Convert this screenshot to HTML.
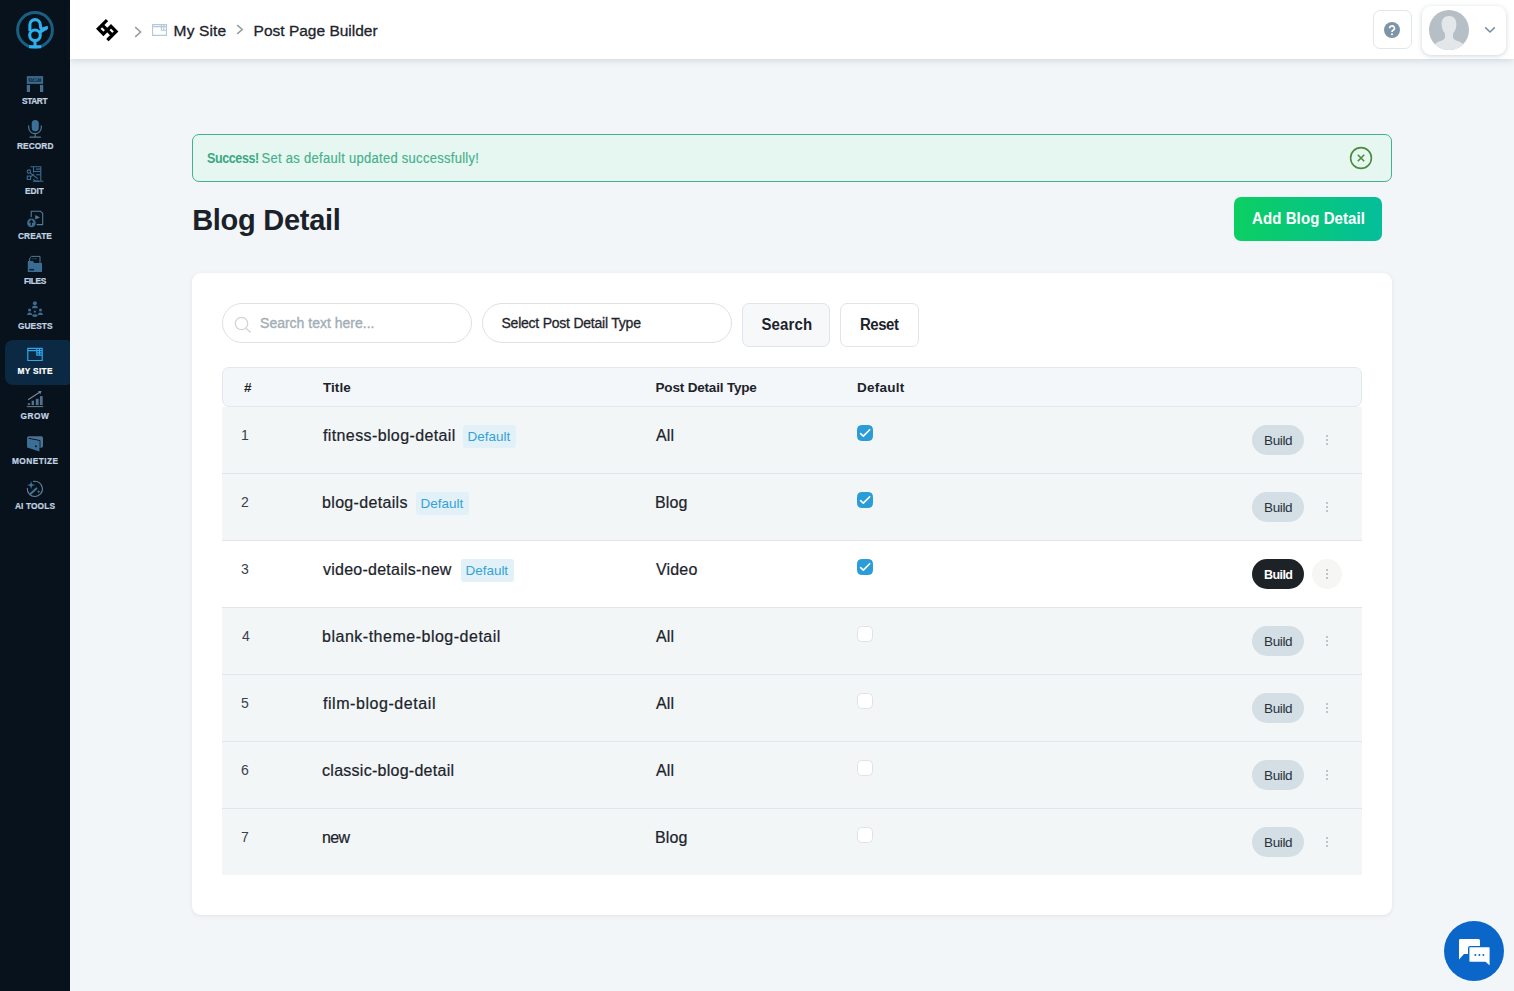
<!DOCTYPE html>
<html lang="en">
<head>
<meta charset="utf-8">
<title>Post Page Builder</title>
<style>
*{box-sizing:border-box;margin:0;padding:0}
html,body{width:1514px;height:991px;overflow:hidden}
body{background:#f2f6f9;font-family:"Liberation Sans",sans-serif;color:#1c232b;position:relative}
.abs{position:absolute}
.t{position:absolute;white-space:nowrap;line-height:1}
#side{position:absolute;left:0;top:0;width:70px;height:991px;background:#07121c}
#top{position:absolute;left:70px;top:0;width:1444px;height:59px;background:#fff;box-shadow:0 2px 7px rgba(40,60,80,.15)}
#navact{position:absolute;left:5px;top:340px;width:65px;height:45px;background:#0b2942;border-radius:8px 3px 3px 8px}
#alert{position:absolute;left:192px;top:134px;width:1200px;height:48px;border:1px solid #43b28c;border-radius:7px;background:#e6f7f1}
#add{position:absolute;left:1234px;top:197px;width:148px;height:44px;border-radius:7px;background:linear-gradient(90deg,#0ccf62,#04be9a)}
#card{position:absolute;left:192px;top:273px;width:1200px;height:642px;background:#fff;border-radius:9px;box-shadow:0 1px 4px rgba(40,60,80,.09)}
.pill{position:absolute;top:303px;height:40px;border:1px solid #dde2e6;border-radius:20px;background:#fff}
.btn{position:absolute;top:303px;height:44px;border:1px solid #dfe5ea;border-radius:7px;background:#fff}
#thead{position:absolute;left:222px;top:367px;width:1140px;height:40px;background:#f4f7f9;border:1px solid #e3e8ec;border-radius:7px}
.row{position:absolute;left:222px;width:1140px;height:67px;background:#f2f6f7;border-bottom:1px solid #e1e6ea}
.row.hov{background:#fff}
.badge{position:absolute;width:53px;height:23px;border-radius:3px;background:#e2f1f8}
.cb{position:absolute;left:857px;width:16px;height:16px;border-radius:4.5px;border:1px solid #dde3e7;background:#fff}
.cb.on{background:#2a9dd8;border-color:#2a9dd8}
.cb svg{position:absolute;left:-1px;top:-1px}
.build{position:absolute;left:1252px;width:52px;height:30px;border-radius:15px;background:#d3dfe5}
.build.dark{background:#1c2226}
.dots{position:absolute;left:1326px;width:2px}
.dots i{display:block;width:2px;height:2px;border-radius:1px;background:#a9b5be;margin-bottom:2px}
.hc{position:absolute;left:1312px;width:30px;height:30px;border-radius:15px;background:#f6f6f5}
#chat{position:absolute;left:1444px;top:921px;width:60px;height:60px;border-radius:30px;background:#0a66c8}
</style>
</head>
<body>
<div id="side">
<div id="navact"></div>
<svg class="abs" style="left:14px;top:9px" width="42" height="42" viewBox="14 9 42 42"><circle cx="35" cy="30" r="17.4" fill="none" stroke="#1a5f82" stroke-width="3"/><g fill="none" stroke="#2fb0ee" stroke-width="3.100" stroke-linecap="butt" stroke-linejoin="round"><path d="M29.900 31.200V24.800a5.200 5.200 0 0 1 10.400 0c0 2.400.600 4.200 2.400 4.600"/><circle cx="35" cy="35.300" r="5.300"/><path d="M39.200 32.600l8.200-5.200"/><path d="M35 40.600v6M29 46.700h12.200"/></g><path d="M42.200 27.200l6-1.200-1.600 4.400z" fill="#2fb0ee"/></svg>
<svg class="abs" style="left:27px;top:76px;overflow:visible" width="16" height="16" viewBox="0 0 16 16"><rect x="-0.2" y="0.1" width="16.3" height="7.8" fill="#3e6b90"/><rect x="1.7" y="1.9" width="12.5" height="3.7" fill="#0a2236"/><text x="8" y="5.1" font-size="3.6" font-weight="bold" fill="#47769a" text-anchor="middle" font-family="Liberation Sans,sans-serif">START</text><rect x="-0.2" y="8.9" width="3.2" height="7.1" fill="#466e8e"/><rect x="13" y="8.9" width="3.2" height="7.1" fill="#466e8e"/></svg>
<svg class="abs" style="left:27px;top:120px;overflow:visible" width="16" height="18" viewBox="0 0 16 18"><rect x="4.7" y="0" width="7.1" height="11.4" rx="3.55" fill="#3a7099"/><path d="M1.7 5.900v1.500a6.300 6.300 0 0 0 12.600 0V5.900M8.200 13.700v3M3 17.200h10.400" fill="none" stroke="#55788f" stroke-width="1.200" stroke-linecap="round"/></svg>
<svg class="abs" style="left:27px;top:166px;overflow:visible" width="17" height="16" viewBox="0 0 17 16"><g fill="none" stroke="#3e6b90" stroke-width="1.100"><path d="M3.500 0.800H13.800V15.200M5.900 15.200H16.400M6.500 0.800V6.600M6.500 5.500H13.800M9 8.700H13.800M9 3.100H13.800"/><circle cx="1.900" cy="5.600" r="1.700"/><rect x="0.300" y="10.100" width="3.300" height="3.300"/><path d="M3 6.900L10.900 12.700M3.700 10.800L7 8.100M6.200 13.400q2 2.300 6 1.500"/></g></svg>
<svg class="abs" style="left:27px;top:211px;overflow:visible" width="16" height="16" viewBox="0 0 16 16"><path d="M4.200 5.900V0.300H13.600L15.700 2.400V13.600H9.700" fill="none" stroke="#5a7a95" stroke-width="1.100" stroke-linejoin="round"/><path d="M8.200 4.100L13 6.400L8.200 8.600z" fill="#55788f"/><circle cx="4.400" cy="11.900" r="4.300" fill="#3e6b90"/><path d="M4.400 14.500V9.800M2.500 11.600L4.400 9.500L6.300 11.600" stroke="#07121c" stroke-width="1.200" fill="none"/></svg>
<svg class="abs" style="left:27px;top:256px;overflow:visible" width="16" height="16" viewBox="0 0 16 16"><path d="M2.700 5.200V2L4.400 0.400H13V7" fill="none" stroke="#55788f" stroke-width="1"/><path d="M4.600 2.800h5.600" stroke="#2a4a66" stroke-width=".9"/><path d="M0.800 5.100h5.200l1.200 1.800h7.800v9H0.800z" fill="#3b6d92"/><rect x="2.300" y="12.900" width="4.800" height="1.600" fill="#0a2236"/></svg>
<svg class="abs" style="left:27px;top:301px;overflow:visible" width="16" height="16" viewBox="0 0 16 16"><g fill="#3d6a90"><circle cx="7.900" cy="2.300" r="2"/><path d="M5 7.300a2.900 2.800 0 0 1 5.800 0z"/><circle cx="2.600" cy="9" r="1.600"/><path d="M0.100 14a2.500 2.600 0 0 1 5 0z"/><circle cx="13.500" cy="9" r="1.600"/><path d="M10.900 14a2.500 2.600 0 0 1 5 0z"/><circle cx="7.900" cy="10.700" r="1.100"/><ellipse cx="7.900" cy="14.600" rx="2.800" ry="1.400"/></g></svg>
<svg class="abs" style="left:27px;top:346px;overflow:visible" width="16" height="16" viewBox="0 0 16 16"><g fill="none" stroke="#2ea6ea" stroke-width="1.200"><path d="M0.800 2.300h14.400v12.200H0.800zM0.800 4.600h14.400M9.800 2.300v6.800h5.400M12.500 2.300v6.800M9.800 6.900h5.400"/></g></svg>
<svg class="abs" style="left:27px;top:391px;overflow:visible" width="16" height="16" viewBox="0 0 16 16"><g fill="#50728d"><rect x="0.800" y="12.200" width="2.300" height="1.900"/><rect x="4.600" y="9.700" width="2.400" height="4.400"/><rect x="8.800" y="7.800" width="2.800" height="6.300"/><rect x="12.900" y="5.100" width="2.800" height="9"/></g><rect x="-0.200" y="15.200" width="16.400" height="0.900" fill="#768c9e"/><path d="M1.100 8.700L12.600 1.300" fill="none" stroke="#768c9e" stroke-width="1.100"/><path d="M10.900 0.300L14.500 0L13.300 3.300z" fill="#768c9e"/></svg>
<svg class="abs" style="left:27px;top:436px;overflow:visible" width="16" height="16" viewBox="0 0 16 16"><rect x="0.100" y="0.200" width="15.900" height="11.500" rx="1.600" fill="#4a7291"/><path d="M1.600 2.300L12.900 4.500V11.700" fill="none" stroke="#07121c" stroke-width="1"/><path d="M0.200 3.200L12.400 5.200V15.500L0.200 11.400z" fill="#3b6f97"/><circle cx="8.900" cy="10.200" r="1.050" fill="#0a1c30"/></svg>
<svg class="abs" style="left:27px;top:481px;overflow:visible" width="16" height="16" viewBox="0 0 16 16"><path d="M6.600 0.400A7.600 7.600 0 1 1 0.300 7.400" fill="none" stroke="#67859d" stroke-width="1.100" stroke-linecap="round"/><path d="M3.100 13.200L9.400 7.400" stroke="#457396" stroke-width="2" stroke-linecap="round"/><path d="M4.100 0l.9 3.200 3.300.9-3.300.9-.900 3.200-.900-3.200L-0.100 4.100l3.300-.9zM11.700 8.700l.500 1.500 1.500.500-1.500.500-.500 1.500-.500-1.500-1.500-.500 1.500-.500z" fill="#457396"/></svg>
</div>
<div id="top">
<svg class="abs" style="left:25px;top:18px" width="24" height="24" viewBox="-12 -12 24 24"><g transform="translate(0.2 0.1) rotate(45)"><path d="M-7.2-5.36V5.36H0V-5.36H7.2V5.36M-7.2 0H7.2" fill="none" stroke="#000" stroke-width="3.25" stroke-linecap="square" stroke-linejoin="miter"/></g></svg>
<svg class="abs" style="left:64px;top:26px" width="8" height="12" viewBox="0 0 8 12"><path d="M1.2 1.2L6.6 6 1.2 10.8" fill="none" stroke="#9b9b9b" stroke-width="1.6"/></svg>
<svg class="abs" style="left:82px;top:24px" width="15" height="12" viewBox="0 0 15 12"><path d="M.6.6h13.8v10.8H.6zM.6 2.6h13.8M9.4.6v5.6h5M11.8.6v5.6" fill="none" stroke="#b3c8d8" stroke-width="1.1"/></svg>
<svg class="abs" style="left:166px;top:24px" width="8" height="11" viewBox="0 0 8 11"><path d="M1.2 1.2L6.2 5.5 1.2 9.8" fill="none" stroke="#9b9b9b" stroke-width="1.6"/></svg>
<div class="abs" style="left:1303px;top:10px;width:39px;height:39px;border:1px solid #e1e6ea;border-radius:7px;background:#fff"></div>
<svg class="abs" style="left:1314px;top:22px" width="16" height="16" viewBox="0 0 16 16"><circle cx="8" cy="8" r="8" fill="#7d95a8"/><path d="M5.6 6.3a2.4 2.3 0 1 1 3.5 2c-.8.4-1.1.8-1.1 1.6" fill="none" stroke="#fff" stroke-width="1.7"/><circle cx="8" cy="12.2" r="1.05" fill="#fff"/></svg>
<div class="abs" style="left:1352px;top:6px;width:84px;height:49px;border-radius:9px;background:#fff;box-shadow:0 1px 5px rgba(40,60,80,.22)"></div>
<svg class="abs" style="left:1359px;top:10px" width="40" height="40" viewBox="0 0 40 40"><defs><clipPath id="av"><circle cx="20" cy="20" r="20"/></clipPath></defs><circle cx="20" cy="20" r="20" fill="#b6bfc5"/><g clip-path="url(#av)" fill="#e3e7e9"><path d="M20 6c4.6 0 7.4 3.2 7.4 8 0 3.6-1.4 7.6-3.4 9.6v3.6c0 1.6 1.4 2.6 4.6 3.8 4.2 1.6 7.4 3.4 8.4 9H3c1-5.6 4.2-7.400 8.4-9 3.200-1.200 4.600-2.200 4.600-3.800v-3.600c-2-2-3.400-6-3.400-9.600 0-4.800 2.800-8 7.400-8z"/></g></svg>
<svg class="abs" style="left:1414px;top:26px" width="12" height="8" viewBox="0 0 12 8"><path d="M1.2 1.4L6 6l4.800-4.600" fill="none" stroke="#7a8ea0" stroke-width="1.5"/></svg>
</div>

<div id="alert"><svg class="abs" style="left:1156px;top:11px" width="24" height="24" viewBox="0 0 24 24"><circle cx="12" cy="12" r="10.4" fill="none" stroke="#4d8b3f" stroke-width="1.6"/><path d="M8.8 8.8l6.4 6.400M15.200 8.800l-6.400 6.400" stroke="#4d8b3f" stroke-width="1.6" fill="none"/></svg></div>
<div id="add"></div>
<div id="card"></div>
<div class="pill" style="left:222px;width:250px"><svg class="abs" style="left:10px;top:10.500px" width="20" height="20" viewBox="0 0 20 20"><circle cx="8.500" cy="8.500" r="6.200" fill="none" stroke="#cfd4d8" stroke-width="1.300"/><path d="M13 13.200l4.600 4.400" stroke="#cfd4d8" stroke-width="1.400"/></svg></div>
<div class="pill" style="left:482px;width:250px"></div>
<div class="btn" style="left:742px;width:88px;background:#f6f8fa"></div>
<div class="btn" style="left:840px;width:79px"></div>
<div id="thead"></div>
<div class="row" style="top:407px"></div>
<div class="badge" style="left:463.1px;top:425px"></div>
<div class="cb on" style="top:425px"><svg width="16" height="16" viewBox="0 0 16 16"><path d="M3.6 8.600l2.700 2.500L12.700 4.700" fill="none" stroke="#fff" stroke-width="1.600" stroke-linecap="round" stroke-linejoin="round"/></svg></div>
<div class="build" style="top:425px"></div>
<div class="dots" style="top:435px"><i></i><i></i><i></i></div>
<div class="row" style="top:474px"></div>
<div class="badge" style="left:415.9px;top:492px"></div>
<div class="cb on" style="top:492px"><svg width="16" height="16" viewBox="0 0 16 16"><path d="M3.6 8.600l2.700 2.500L12.700 4.700" fill="none" stroke="#fff" stroke-width="1.600" stroke-linecap="round" stroke-linejoin="round"/></svg></div>
<div class="build" style="top:492px"></div>
<div class="dots" style="top:502px"><i></i><i></i><i></i></div>
<div class="row hov" style="top:541px"></div>
<div class="badge" style="left:460.5px;top:559px"></div>
<div class="cb on" style="top:559px"><svg width="16" height="16" viewBox="0 0 16 16"><path d="M3.6 8.600l2.700 2.500L12.700 4.700" fill="none" stroke="#fff" stroke-width="1.600" stroke-linecap="round" stroke-linejoin="round"/></svg></div>
<div class="build dark" style="top:559px"></div>
<div class="hc" style="top:559px"></div>
<div class="dots" style="top:569px"><i></i><i></i><i></i></div>
<div class="row" style="top:608px"></div>
<div class="cb" style="top:626px"></div>
<div class="build" style="top:626px"></div>
<div class="dots" style="top:636px"><i></i><i></i><i></i></div>
<div class="row" style="top:675px"></div>
<div class="cb" style="top:693px"></div>
<div class="build" style="top:693px"></div>
<div class="dots" style="top:703px"><i></i><i></i><i></i></div>
<div class="row" style="top:742px"></div>
<div class="cb" style="top:760px"></div>
<div class="build" style="top:760px"></div>
<div class="dots" style="top:770px"><i></i><i></i><i></i></div>
<div class="row" style="top:809px;height:66px;border-bottom:0"></div>
<div class="cb" style="top:827px"></div>
<div class="build" style="top:827px"></div>
<div class="dots" style="top:837px"><i></i><i></i><i></i></div>
<div id="chat"><svg class="abs" style="left:14px;top:17px" width="34" height="30" viewBox="0 0 34 30"><path d="M2 1h18.500a1.500 1.500 0 0 1 1.500 1.500V16H6l-5 5.500V2.500A1.500 1.500 0 0 1 2 1z" fill="#fff"/><path d="M12.200 8.600h18.600a1.500 1.500 0 0 1 1.500 1.500v19l-5-4.600H12.200a1.500 1.500 0 0 1-1.500-1.500V10.100a1.500 1.500 0 0 1 1.500-1.500z" fill="#fff" stroke="#0a66c8" stroke-width="1.400"/><circle cx="17.400" cy="17" r="1" fill="#0a66c8"/><circle cx="21.400" cy="17" r="1" fill="#0a66c8"/><circle cx="25.400" cy="17" r="1" fill="#0a66c8"/></svg></div>
<div class="t" id="c1" style="left:173.60px;top:23.48px;font-size:15.5px;font-weight:normal;color:#1c232b;letter-spacing:0.150px;-webkit-text-stroke:0.3px currentColor">My Site</div>
<div class="t" id="c2" style="left:253.58px;top:23.48px;font-size:15.5px;font-weight:normal;color:#1c232b;letter-spacing:0.000px;-webkit-text-stroke:0.3px currentColor">Post Page Builder</div>
<div class="t" id="al1" style="left:207.04px;top:153.22px;font-size:12.5px;font-weight:bold;color:#3aa981;letter-spacing:-0.386px;transform:scaleY(1.1);transform-origin:0 85%">Success!</div>
<div class="t" id="al2" style="left:261.58px;top:151.80px;font-size:13px;font-weight:normal;color:#45b08a;letter-spacing:0.283px;-webkit-text-stroke:0.15px currentColor;transform:scaleY(1.06);transform-origin:0 85%">Set as default updated successfully!</div>
<div class="t" id="h1" style="left:192.16px;top:206.05px;font-size:29px;font-weight:bold;color:#1b2128;letter-spacing:-0.270px">Blog Detail</div>
<div class="t" id="addt" style="left:1252.02px;top:211.30px;font-size:15px;font-weight:bold;color:#fff;letter-spacing:0.090px;transform:scaleY(1.06);transform-origin:0 85%">Add Blog Detail</div>
<div class="t" id="ph" style="left:260.06px;top:315.85px;font-size:14px;font-weight:normal;color:#a3adb5;letter-spacing:0.000px;-webkit-text-stroke:0.35px currentColor">Search text here...</div>
<div class="t" id="sel" style="left:501.48px;top:315.85px;font-size:14px;font-weight:normal;color:#1f262c;letter-spacing:-0.229px;-webkit-text-stroke:0.3px currentColor">Select Post Detail Type</div>
<div class="t" id="bs" style="left:761.48px;top:317.30px;font-size:15px;font-weight:bold;color:#1c232b;letter-spacing:0.108px;transform:scaleY(1.04);transform-origin:0 85%">Search</div>
<div class="t" id="br" style="left:860.02px;top:317.30px;font-size:15px;font-weight:bold;color:#1c232b;letter-spacing:-0.495px;transform:scaleY(1.04);transform-origin:0 85%">Reset</div>
<div class="t" id="th0" style="left:243.94px;top:381.27px;font-size:13.5px;font-weight:bold;color:#1c232b;letter-spacing:0.000px">#</div>
<div class="t" id="th1" style="left:323.00px;top:381.27px;font-size:13.5px;font-weight:bold;color:#1c232b;letter-spacing:0.045px">Title</div>
<div class="t" id="th2" style="left:655.54px;top:381.27px;font-size:13.5px;font-weight:bold;color:#1c232b;letter-spacing:-0.180px">Post Detail Type</div>
<div class="t" id="th3" style="left:857.06px;top:381.27px;font-size:13.5px;font-weight:bold;color:#1c232b;letter-spacing:0.240px">Default</div>
<div class="t" id="n1" style="left:241.08px;top:428.15px;font-size:14px;font-weight:normal;color:#39424b;letter-spacing:0.000px">1</div>
<div class="t" id="t1" style="left:322.94px;top:427.56px;font-size:16px;font-weight:normal;color:#1c232b;letter-spacing:0.390px;-webkit-text-stroke:0.22px currentColor">fitness-blog-detail</div>
<div class="t" id="bd1" style="left:467.60px;top:429.67px;font-size:13.5px;font-weight:normal;color:#35a2d4;letter-spacing:-0.030px">Default</div>
<div class="t" id="ty1" style="left:655.98px;top:427.56px;font-size:16px;font-weight:normal;color:#1c232b;letter-spacing:0.090px;-webkit-text-stroke:0.22px currentColor">All</div>
<div class="t" id="bu1" style="left:1264.02px;top:433.57px;font-size:13.5px;font-weight:normal;color:#28323a;letter-spacing:-0.360px">Build</div>
<div class="t" id="n2" style="left:241.08px;top:495.15px;font-size:14px;font-weight:normal;color:#39424b;letter-spacing:0.000px">2</div>
<div class="t" id="t2" style="left:322.04px;top:494.56px;font-size:16px;font-weight:normal;color:#1c232b;letter-spacing:0.327px;-webkit-text-stroke:0.22px currentColor">blog-details</div>
<div class="t" id="bd2" style="left:420.58px;top:496.67px;font-size:13.5px;font-weight:normal;color:#35a2d4;letter-spacing:-0.030px">Default</div>
<div class="t" id="ty2" style="left:655.08px;top:494.56px;font-size:16px;font-weight:normal;color:#1c232b;letter-spacing:0.060px;-webkit-text-stroke:0.22px currentColor">Blog</div>
<div class="t" id="bu2" style="left:1264.02px;top:500.57px;font-size:13.5px;font-weight:normal;color:#28323a;letter-spacing:-0.360px">Build</div>
<div class="t" id="n3" style="left:241.08px;top:562.15px;font-size:14px;font-weight:normal;color:#39424b;letter-spacing:0.000px">3</div>
<div class="t" id="t3" style="left:322.94px;top:561.56px;font-size:16px;font-weight:normal;color:#1c232b;letter-spacing:0.248px;-webkit-text-stroke:0.22px currentColor">video-details-new</div>
<div class="t" id="bd3" style="left:465.54px;top:563.67px;font-size:13.5px;font-weight:normal;color:#35a2d4;letter-spacing:-0.030px">Default</div>
<div class="t" id="ty3" style="left:655.98px;top:561.56px;font-size:16px;font-weight:normal;color:#1c232b;letter-spacing:0.180px;-webkit-text-stroke:0.22px currentColor">Video</div>
<div class="t" id="bu3" style="left:1264.02px;top:569.42px;font-size:12.5px;font-weight:bold;color:#fff;letter-spacing:-0.585px;transform:scaleY(1.08);transform-origin:0 85%">Build</div>
<div class="t" id="n4" style="left:241.96px;top:629.15px;font-size:14px;font-weight:normal;color:#39424b;letter-spacing:0.000px">4</div>
<div class="t" id="t4" style="left:322.04px;top:628.56px;font-size:16px;font-weight:normal;color:#1c232b;letter-spacing:0.507px;-webkit-text-stroke:0.22px currentColor">blank-theme-blog-detail</div>
<div class="t" id="ty4" style="left:655.98px;top:628.56px;font-size:16px;font-weight:normal;color:#1c232b;letter-spacing:0.090px;-webkit-text-stroke:0.22px currentColor">All</div>
<div class="t" id="bu4" style="left:1264.02px;top:634.57px;font-size:13.5px;font-weight:normal;color:#28323a;letter-spacing:-0.360px">Build</div>
<div class="t" id="n5" style="left:241.08px;top:696.15px;font-size:14px;font-weight:normal;color:#39424b;letter-spacing:0.000px">5</div>
<div class="t" id="t5" style="left:322.94px;top:695.56px;font-size:16px;font-weight:normal;color:#1c232b;letter-spacing:0.564px;-webkit-text-stroke:0.22px currentColor">film-blog-detail</div>
<div class="t" id="ty5" style="left:655.98px;top:695.56px;font-size:16px;font-weight:normal;color:#1c232b;letter-spacing:0.090px;-webkit-text-stroke:0.22px currentColor">All</div>
<div class="t" id="bu5" style="left:1264.02px;top:701.57px;font-size:13.5px;font-weight:normal;color:#28323a;letter-spacing:-0.360px">Build</div>
<div class="t" id="n6" style="left:241.08px;top:763.15px;font-size:14px;font-weight:normal;color:#39424b;letter-spacing:0.000px">6</div>
<div class="t" id="t6" style="left:322.04px;top:762.56px;font-size:16px;font-weight:normal;color:#1c232b;letter-spacing:0.270px;-webkit-text-stroke:0.22px currentColor">classic-blog-detail</div>
<div class="t" id="ty6" style="left:655.98px;top:762.56px;font-size:16px;font-weight:normal;color:#1c232b;letter-spacing:0.090px;-webkit-text-stroke:0.22px currentColor">All</div>
<div class="t" id="bu6" style="left:1264.02px;top:768.57px;font-size:13.5px;font-weight:normal;color:#28323a;letter-spacing:-0.360px">Build</div>
<div class="t" id="n7" style="left:241.08px;top:830.15px;font-size:14px;font-weight:normal;color:#39424b;letter-spacing:0.000px">7</div>
<div class="t" id="t7" style="left:322.04px;top:829.56px;font-size:16px;font-weight:normal;color:#1c232b;letter-spacing:-0.630px;-webkit-text-stroke:0.22px currentColor">new</div>
<div class="t" id="ty7" style="left:655.08px;top:829.56px;font-size:16px;font-weight:normal;color:#1c232b;letter-spacing:0.060px;-webkit-text-stroke:0.22px currentColor">Blog</div>
<div class="t" id="bu7" style="left:1264.02px;top:835.57px;font-size:13.5px;font-weight:normal;color:#28323a;letter-spacing:-0.360px">Build</div>
<div class="t" id="nvstart" style="left:21.96px;top:97.17px;font-size:8.3px;font-weight:bold;color:#c3d3e1;letter-spacing:-0.360px;-webkit-text-stroke:0.2px currentColor;transform:scaleY(1.14);transform-origin:0 85%">START</div>
<div class="t" id="nvrecord" style="left:16.98px;top:142.17px;font-size:8.3px;font-weight:bold;color:#c3d3e1;letter-spacing:0.108px;-webkit-text-stroke:0.2px currentColor;transform:scaleY(1.14);transform-origin:0 85%">RECORD</div>
<div class="t" id="nvedit" style="left:25.00px;top:187.17px;font-size:8.3px;font-weight:bold;color:#c3d3e1;letter-spacing:0.000px;-webkit-text-stroke:0.2px currentColor;transform:scaleY(1.14);transform-origin:0 85%">EDIT</div>
<div class="t" id="nvcreate" style="left:18.02px;top:232.17px;font-size:8.3px;font-weight:bold;color:#c3d3e1;letter-spacing:0.072px;-webkit-text-stroke:0.2px currentColor;transform:scaleY(1.14);transform-origin:0 85%">CREATE</div>
<div class="t" id="nvfiles" style="left:23.98px;top:277.17px;font-size:8.3px;font-weight:bold;color:#c3d3e1;letter-spacing:-0.270px;-webkit-text-stroke:0.2px currentColor;transform:scaleY(1.14);transform-origin:0 85%">FILES</div>
<div class="t" id="nvguests" style="left:18.02px;top:322.17px;font-size:8.3px;font-weight:bold;color:#c3d3e1;letter-spacing:0.072px;-webkit-text-stroke:0.2px currentColor;transform:scaleY(1.14);transform-origin:0 85%">GUESTS</div>
<div class="t" id="nvmysite" style="left:17.52px;top:367.17px;font-size:8.3px;font-weight:bold;color:#fff;letter-spacing:0.330px;-webkit-text-stroke:0.2px currentColor;transform:scaleY(1.14);transform-origin:0 85%">MY SITE</div>
<div class="t" id="nvgrow" style="left:20.54px;top:412.17px;font-size:8.3px;font-weight:bold;color:#c3d3e1;letter-spacing:0.540px;-webkit-text-stroke:0.2px currentColor;transform:scaleY(1.14);transform-origin:0 85%">GROW</div>
<div class="t" id="nvmonetize" style="left:11.98px;top:457.17px;font-size:8.3px;font-weight:bold;color:#c3d3e1;letter-spacing:0.463px;-webkit-text-stroke:0.2px currentColor;transform:scaleY(1.14);transform-origin:0 85%">MONETIZE</div>
<div class="t" id="nvaitools" style="left:15.00px;top:502.17px;font-size:8.3px;font-weight:bold;color:#c3d3e1;letter-spacing:0.129px;-webkit-text-stroke:0.2px currentColor;transform:scaleY(1.14);transform-origin:0 85%">AI TOOLS</div>
</body>
</html>
